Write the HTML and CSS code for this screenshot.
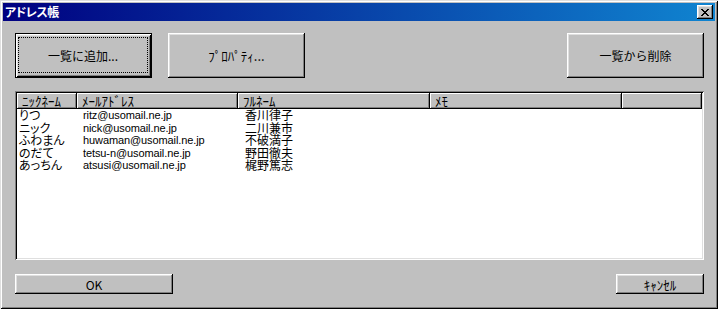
FILE: index.html
```html
<!DOCTYPE html>
<html>
<head>
<meta charset="utf-8">
<title>アドレス帳</title>
<link rel="stylesheet" href="styles.css">
</head>
<body>
<div class="window">
  <div class="titlebar">
    <span class="title">アドレス帳</span>
    <button class="close" aria-label="閉じる">
      <svg width="8" height="7" viewBox="0 0 8 7" shape-rendering="crispEdges">
        <path d="M0 0h2v1h-2zM6 0h2v1h-2zM1 1h2v1h-2zM5 1h2v1h-2zM2 2h4v1h-4zM3 3h2v1h-2zM2 4h4v1h-4zM1 5h2v1h-2zM5 5h2v1h-2zM0 6h2v1h-2zM6 6h2v1h-2z" fill="#000"/>
      </svg>
    </button>
  </div>

  <div class="content">
    <div class="toolbar">
      <button class="btn big default"><span class="focus">一覧に追加...</span></button>
      <button class="btn big half">ﾌﾟﾛﾊﾟﾃｨ...</button>
      <button class="btn big push-right">一覧から削除</button>
    </div>

    <div class="list">
      <div class="list-head">
        <div class="col">ﾆｯｸﾈｰﾑ</div>
        <div class="col">ﾒｰﾙｱﾄﾞﾚｽ</div>
        <div class="col">ﾌﾙﾈｰﾑ</div>
        <div class="col">ﾒﾓ</div>
        <div class="col"></div>
      </div>
      <div class="list-body">
        <div class="row"><span class="nick">りつ</span><span class="mail">ritz@usomail.ne.jp</span><span>香川律子</span><span></span><span></span></div>
        <div class="row"><span class="nick">ニック</span><span class="mail">nick@usomail.ne.jp</span><span>二川兼市</span><span></span><span></span></div>
        <div class="row"><span class="nick">ふわまん</span><span class="mail">huwaman@usomail.ne.jp</span><span>不破満子</span><span></span><span></span></div>
        <div class="row"><span class="nick">のだて</span><span class="mail">tetsu-n@usomail.ne.jp</span><span>野田徹夫</span><span></span><span></span></div>
        <div class="row"><span class="nick">あっちん</span><span class="mail">atsusi@usomail.ne.jp</span><span>梶野篤志</span><span></span><span></span></div>
      </div>
    </div>

    <div class="footer">
      <button class="btn ok">OK</button>
      <button class="btn cancel half">ｷｬﾝｾﾙ</button>
    </div>
  </div>
</div>
</body>
</html>
```

FILE: styles.css
```css
body {
   margin: 0;
   background-color: #c0c0c0;
   font-family: "Noto Sans CJK JP", "Liberation Sans", sans-serif;
   font-size: 12px;
   color: #000;
}

.window {
   width: 718px;
   height: 309px;
   box-sizing: border-box;
   padding: 3px;
   background: #c0c0c0;
   display: flex;
   flex-direction: column;
   box-shadow: inset 1px 1px #dfdfdf, inset -1px -1px #000,
               inset 2px 2px #fff, inset -2px -2px #808080;
}

.titlebar {
   height: 18px;
   display: flex;
   align-items: center;
   padding: 0 2px;
   background: linear-gradient(to right, #000080, #1084d0);
}

.title {
   color: #fff;
   font-weight: bold;
   font-size: 12px;
   line-height: 18px;
   letter-spacing: -0.5px;
   font-feature-settings: "palt";
}

.close {
   margin-left: auto;
   width: 16px;
   height: 14px;
   padding: 0;
   border: none;
   background: #c0c0c0;
   display: flex;
   align-items: center;
   justify-content: center;
   box-shadow: inset -1px -1px #000, inset 1px 1px #fff,
               inset -2px -2px #808080, inset 2px 2px #dfdfdf;
}

.close svg {
   display: block;
}

.content {
   flex: 1;
   display: flex;
   flex-direction: column;
   padding: 12px 11px 12px 12px;
}

/* buttons */
.btn {
   font: inherit;
   color: #000;
   border: none;
   padding: 0;
   background: #c0c0c0;
   box-shadow: inset -1px -1px #000, inset 1px 1px #fff,
               inset -2px -2px #808080, inset 2px 2px #dfdfdf;
}

.half {
   font-size: 13px;
}

.toolbar {
   display: flex;
   gap: 16px;
   height: 45px;
}

.big {
   width: 137px;
   height: 45px;
}

.push-right {
   margin-left: auto;
}

.default {
   padding: 4px 4px 5px 3px;
   display: flex;
   box-shadow: inset 0 0 0 1px #000, inset 2px 2px #fff,
               inset -2px -2px #000, inset 3px 3px #dfdfdf,
               inset -3px -3px #808080;
}

.focus {
   flex: 1;
   display: flex;
   align-items: center;
   justify-content: center;
   border: 1px dotted #000;
}

/* list view */
.list {
   margin-top: 13px;
   height: 169px;
   box-sizing: border-box;
   padding: 2px;
   background: #fff;
   box-shadow: inset 1px 1px #808080, inset -1px -1px #fff,
               inset 2px 2px #000, inset -2px -2px #dfdfdf;
}

.list-head,
.row {
   display: grid;
   grid-template-columns: 60px 161px 192px 192px 1fr;
}

.list-head {
   height: 16px;
   background: #c0c0c0;
}

.col {
   padding-left: 5px;
   font-size: 13px;
   line-height: 15px;
   white-space: nowrap;
   box-shadow: inset -1px -1px #000, inset 1px 1px #fff,
               inset -2px -2px #808080;
}

.row {
   height: 12.5px;
   line-height: 12.5px;
   white-space: nowrap;
}

.row span {
   padding-left: 7px;
}

.row .nick {
   padding-left: 2px;
   font-feature-settings: "palt";
}

.row .mail {
   padding-left: 6px;
   font-family: "Liberation Sans", sans-serif;
   font-size: 11px;
   letter-spacing: -0.1px;
}

.footer {
   margin-top: 14px;
   display: flex;
   justify-content: space-between;
}

.ok {
   width: 158px;
   height: 20px;
}

.cancel {
   width: 88px;
   height: 20px;
}
```
